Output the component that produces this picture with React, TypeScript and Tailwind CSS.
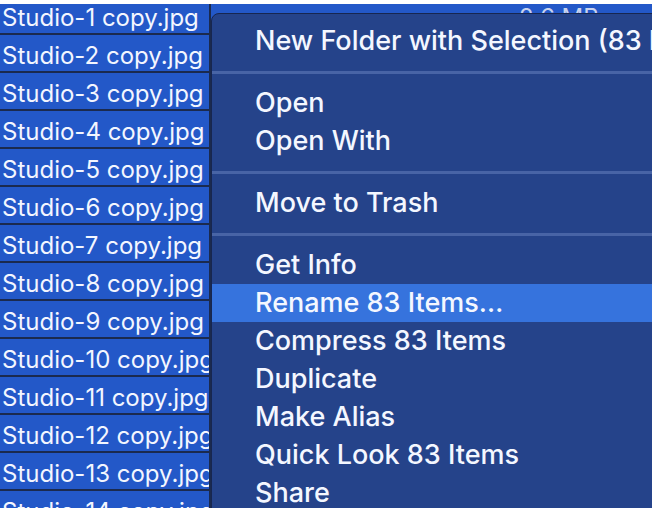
import React from 'react';

const files = Array.from({ length: 14 }, (_, i) => `Studio-${i + 1} copy.jpg`);

type MenuEntry = { label: string; highlighted?: boolean } | 'sep';

const menu: MenuEntry[] = [
  { label: 'New Folder with Selection (83 Items)' },
  'sep',
  { label: 'Open' },
  { label: 'Open With' },
  'sep',
  { label: 'Move to Trash' },
  'sep',
  { label: 'Get Info' },
  { label: 'Rename 83 Items…', highlighted: true },
  { label: 'Compress 83 Items' },
  { label: 'Duplicate' },
  { label: 'Make Alias' },
  { label: 'Quick Look 83 Items' },
  { label: 'Share' },
];

const FileRow: React.FC<{ name: string; size?: string }> = ({ name, size }) => (
  <div className="flex h-[38px] border-b-2 border-[#1b2a4e] bg-[#2358c8]">
    <div className="w-[211px] shrink-0 overflow-hidden whitespace-nowrap border-r-2 border-[#1b2a4e] pl-[2px] pt-[3px] text-[24px] leading-[36px] text-[#f3f6ff]">
      {name}
    </div>
    <div className="flex-1 whitespace-nowrap pl-[308px] pt-[3px] text-[24px] leading-[36px] text-[#c9d3ee]">
      {size}
    </div>
  </div>
);

const App: React.FC = () => {
  return (
    <div
      className="relative h-[508px] w-[652px] overflow-hidden bg-white"
      style={{ fontFamily: 'Inter, "Liberation Sans", sans-serif' }}
    >
      <div className="h-[4px] bg-white" />
      <div className="h-[504px] overflow-hidden">
        <div className="-mt-[7px]">
          {files.map((f, i) => (
            <FileRow key={f} name={f} size={i === 0 ? '2.6 MB' : undefined} />
          ))}
        </div>
      </div>

      {/* context menu */}
      <div className="absolute left-[211px] top-[13px] w-[520px] rounded-tl-[8px] border border-[#172650] bg-[#25438a] pt-[8px]">
        {menu.map((m, i) =>
          m === 'sep' ? (
            <div key={i} className="flex h-[24px] items-center">
              <div className="h-[3px] w-full bg-[#4864a6]" />
            </div>
          ) : (
            <div
              key={i}
              className={`h-[38px] whitespace-nowrap pl-[43px] text-[27px] leading-[38px] font-medium text-[#f4f7ff] ${
                m.highlighted ? 'bg-[#3673dd]' : ''
              }`}
            >
              {m.label}
            </div>
          )
        )}
      </div>
    </div>
  );
};

export default App;
